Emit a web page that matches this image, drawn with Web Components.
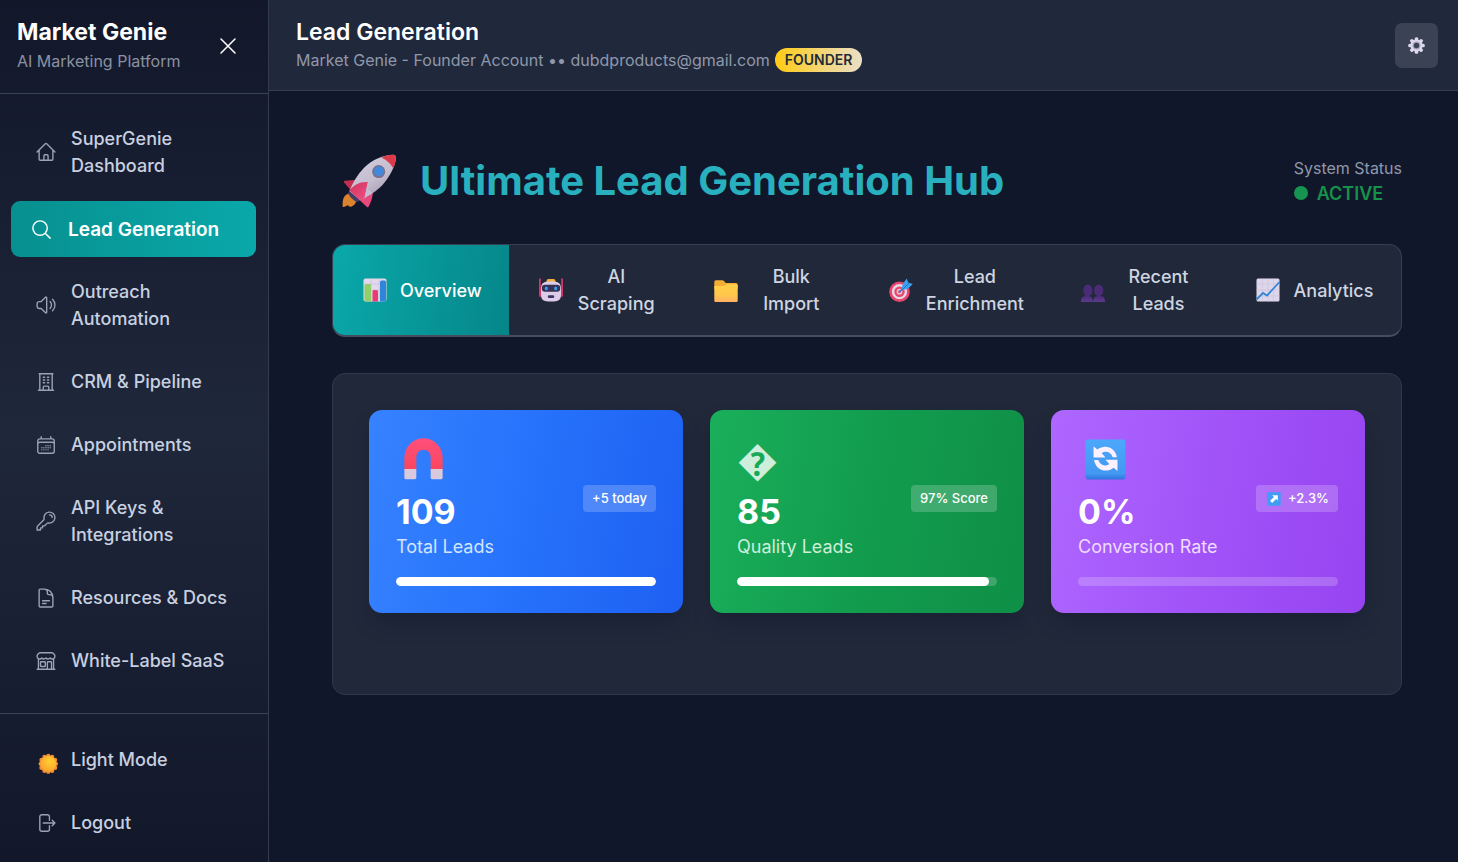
<!DOCTYPE html>
<html lang="en">
<head>
<meta charset="utf-8">
<meta name="viewport" content="width=device-width, initial-scale=1">
<title>Market Genie</title>
<style>
    body {
        margin: 0;
        background: #11172a;
        color: #fff;
        font-family: Inter, "Liberation Sans", sans-serif;
        font-size: 18px;
        line-height: 27px;
    }
</style>
</head>
<body>
<market-app>
    <side-bar slot="sidebar" heading="Market Genie" tagline="AI Marketing Platform">
        <nav-item icon="home">SuperGenie Dashboard</nav-item>
        <nav-item icon="search" active>Lead Generation</nav-item>
        <nav-item icon="speaker">Outreach Automation</nav-item>
        <nav-item icon="building">CRM &amp; Pipeline</nav-item>
        <nav-item icon="calendar">Appointments</nav-item>
        <nav-item icon="key">API Keys &amp; Integrations</nav-item>
        <nav-item icon="document">Resources &amp; Docs</nav-item>
        <nav-item icon="store">White-Label SaaS</nav-item>
        <nav-item slot="footer" icon="sun">Light Mode</nav-item>
        <nav-item slot="footer" icon="logout">Logout</nav-item>
    </side-bar>
    <top-bar slot="topbar" heading="Lead Generation" badge="FOUNDER">Market Genie - Founder Account •• dubdproducts@gmail.com</top-bar>
    <page-hero icon="rocket" status="ACTIVE">Ultimate Lead Generation Hub</page-hero>
    <tab-bar>
        <tab-item icon="chart" active>Overview</tab-item>
        <tab-item icon="robot">AI Scraping</tab-item>
        <tab-item icon="folder">Bulk Import</tab-item>
        <tab-item icon="target">Lead Enrichment</tab-item>
        <tab-item icon="people">Recent Leads</tab-item>
        <tab-item icon="trend">Analytics</tab-item>
    </tab-bar>
    <stat-panel>
        <stat-card color="blue" value="109" label="Total Leads" progress="100">
            <app-icon slot="icon" name="magnet"></app-icon>
            <span slot="badge">+5 today</span>
        </stat-card>
        <stat-card color="green" value="85" label="Quality Leads" progress="97">
            <span slot="icon">&#xFFFD;</span>
            <span slot="badge">97% Score</span>
        </stat-card>
        <stat-card color="purple" value="0%" label="Conversion Rate" progress="0">
            <app-icon slot="icon" name="refresh"></app-icon>
            <app-icon slot="badge" name="arrow"></app-icon>
            <span slot="badge">+2.3%</span>
        </stat-card>
    </stat-panel>
</market-app>

<script>
// 24x24 line icons
const LINE_ICONS = {
    home: 'm2.25 12 8.954-8.955c.44-.439 1.152-.439 1.591 0L21.75 12M4.5 9.75v10.125c0 .621.504 1.125 1.125 1.125H9.75v-4.875c0-.621.504-1.125 1.125-1.125h2.25c.621 0 1.125.504 1.125 1.125V21h4.125c.621 0 1.125-.504 1.125-1.125V9.75M8.25 21h8.25',
    search: 'm21 21-5.197-5.197m0 0A7.5 7.5 0 1 0 5.196 5.196a7.5 7.5 0 0 0 10.607 10.607Z',
    speaker: 'M19.114 5.636a9 9 0 0 1 0 12.728M16.463 8.288a5.25 5.25 0 0 1 0 7.424M6.75 8.25l4.72-4.72a.75.75 0 0 1 1.28.53v15.88a.75.75 0 0 1-1.28.53l-4.72-4.72H4.51c-.88 0-1.704-.507-1.938-1.354A9.009 9.009 0 0 1 2.25 12c0-.83.112-1.633.322-2.396C2.806 8.756 3.63 8.25 4.51 8.25H6.75Z',
    building: 'M3.75 21h16.5M4.5 3h15M5.25 3v18m13.5-18v18M9 6.75h1.5m-1.5 3h1.5m-1.5 3h1.5m3-6H15m-1.5 3H15m-1.5 3H15M9 21v-3.375c0-.621.504-1.125 1.125-1.125h3.75c.621 0 1.125.504 1.125 1.125V21',
    calendar: 'M6.75 3v2.25M17.25 3v2.25M3 18.75V7.5a2.25 2.25 0 0 1 2.25-2.25h13.5A2.25 2.25 0 0 1 21 7.5v11.25m-18 0A2.25 2.25 0 0 0 5.25 21h13.5A2.25 2.25 0 0 0 21 18.75m-18 0v-7.5A2.25 2.25 0 0 1 5.25 9h13.5A2.25 2.25 0 0 1 21 11.25v7.5m-9-6h.008v.008H12v-.008ZM12 15h.008v.008H12V15Zm0 2.25h.008v.008H12v-.008ZM9.75 15h.008v.008H9.75V15Zm0 2.25h.008v.008H9.75v-.008ZM7.5 15h.008v.008H7.5V15Zm0 2.25h.008v.008H7.5v-.008Zm6.75-4.5h.008v.008h-.008v-.008Zm0 2.25h.008v.008h-.008V15Zm0 2.25h.008v.008h-.008v-.008Zm2.25-4.5h.008v.008H16.5v-.008Zm0 2.25h.008v.008H16.5V15Z',
    key: 'M15.75 5.25a3 3 0 0 1 3 3m3 0a6 6 0 0 1-7.029 5.912c-.563-.097-1.159.026-1.563.43L10.5 17.25H8.25v2.25H6v2.25H2.25v-2.818c0-.597.237-1.17.659-1.591l6.499-6.499c.404-.404.527-1 .43-1.563A6 6 0 1 1 21.75 8.25Z',
    document: 'M19.5 14.25v-2.625a3.375 3.375 0 0 0-3.375-3.375h-1.5A1.125 1.125 0 0 1 13.5 7.125v-1.5a3.375 3.375 0 0 0-3.375-3.375H8.25m0 12.75h7.5m-7.5 3H12M10.5 2.25H5.625c-.621 0-1.125.504-1.125 1.125v17.25c0 .621.504 1.125 1.125 1.125h12.75c.621 0 1.125-.504 1.125-1.125V11.25a9 9 0 0 0-9-9Z',
    store: 'M13.5 21v-7.5a.75.75 0 0 1 .75-.75h3a.75.75 0 0 1 .75.75V21m-4.5 0H2.36m11.14 0H18m0 0h3.64m-1.39 0V9.349M3.75 21V9.349m0 0a3.001 3.001 0 0 0 3.75-.615A2.993 2.993 0 0 0 9.75 9.75c.896 0 1.7-.393 2.25-1.016a2.993 2.993 0 0 0 2.25 1.016c.896 0 1.7-.393 2.25-1.015a3.001 3.001 0 0 0 3.75.614m-16.5 0a3.004 3.004 0 0 1-.621-4.72l1.189-1.19A1.5 1.5 0 0 1 5.378 3h13.243a1.5 1.5 0 0 1 1.06.44l1.19 1.189a3 3 0 0 1-.621 4.72M6.75 18h3.75a.75.75 0 0 0 .75-.75V13.5a.75.75 0 0 0-.75-.75H6.75a.75.75 0 0 0-.75.75v3.75c0 .414.336.75.75.75Z',
    logout: 'M15.75 9V5.25A2.25 2.25 0 0 0 13.5 3h-6a2.25 2.25 0 0 0-2.25 2.25v13.5A2.25 2.25 0 0 0 7.5 21h6a2.25 2.25 0 0 0 2.25-2.25V15m3 0 3-3m0 0-3-3m3 3H9',
    close: 'M5 19 19 5M5 5l14 14'
};

// coloured pictures, all on a 24x24 grid
const COLOR_ICONS = {
    sun: `
        <defs><radialGradient id="g" cx=".6" cy=".35" r=".7"><stop offset="0" stop-color="#ffd02e"/><stop offset="1" stop-color="#f9a02c"/></radialGradient></defs>
        <g transform="translate(.3 2.4)"><g fill="#f38a34"><circle cx="14.2" cy="5.2" r="2.4"/><circle cx="18.4" cy="6.3" r="2.4"/><circle cx="21.600" cy="9.500" r="2.4"/><circle cx="22.400" cy="13.800" r="2.4"/><circle cx="21.600" cy="18.100" r="2.4"/><circle cx="18.400" cy="21.300" r="2.4"/><circle cx="14.200" cy="22.300" r="2.4"/><circle cx="10" cy="21.300" r="2.4"/><circle cx="6.800" cy="18.100" r="2.4"/><circle cx="6" cy="13.800" r="2.4"/><circle cx="6.800" cy="9.500" r="2.4"/><circle cx="10" cy="6.300" r="2.4"/></g>
        <circle cx="14.2" cy="13.8" r="8.8" fill="url(#g)"/></g>`,
    gear: `
        <g fill="#dcd9ea"><g id="t"><rect x="9.7" y="1.5" width="4.6" height="21" rx="2"/><rect x="1.5" y="9.7" width="21" height="4.6" rx="2"/></g><use href="#t" transform="rotate(45 12 12)"/><circle cx="12" cy="12" r="7.6"/></g>
        <circle cx="12" cy="12" r="5" fill="#aaa5bd"/><circle cx="12" cy="12" r="3.4" fill="#3b4356"/>`,
    rocket: `
        <defs>
            <linearGradient id="b" x1=".2" y1="0" x2=".8" y2="1"><stop offset="0" stop-color="#d6d0e0"/><stop offset=".55" stop-color="#c4bccf"/><stop offset="1" stop-color="#9d93a8"/></linearGradient>
            <linearGradient id="f" x1="0" y1="0" x2="1" y2="1"><stop offset="0" stop-color="#cf3458"/><stop offset="1" stop-color="#f0518a"/></linearGradient>
        </defs>
        <path d="M3 17.500C.9 18.100.1 20 .3 23.500 1.200 23.600 2 23.200 2.500 22.700 2.800 23.200 3.600 23.700 4.300 23.300 5.700 22.600 6.300 21.700 6.300 20.500z" fill="#dc832d"/>
        <path d="M7.800 11.300 1.200 11.900Q.6 12 .9 12.500L4 16.300z" fill="#c32d50"/>
        <path d="M13.700 17.200C13.600 19.500 12.800 21.500 11.800 23.400Q11.500 23.900 11.100 23.500L6.800 19.600z" fill="#e8487a"/>
        <path d="M3.300 16.100 2.700 17.500C3.500 19 5.200 20.800 6.700 21.300L8.200 20.700z" fill="#433b66"/>
        <path d="M23.900 1.400Q23.900.4 22.900.3C18.500.4 13.500 2.300 9.700 6.200 6.800 9.200 4.700 12.800 3.300 16.400L8 20.500C13 18.300 17.300 15.300 20 11.200 22.500 7.500 24 4 23.900 1.400z" fill="url(#b)"/>
        <path d="M17.500 1.500C19.500.6 21.300.2 22.900.3Q23.900.4 23.900 1.400C24 3 23.500 4.800 22.800 6.300 21.500 4.100 19.800 2.600 17.500 1.500z" fill="#dc3a48"/>
        <circle cx="16.300" cy="7.800" r="2.900" fill="#77708f"/><circle cx="16.400" cy="7.700" r="2.200" fill="#4289dc"/>
        <path d="M3.300 16.200C5.300 13.800 8.200 12.200 11.500 12.500L10 19.400 8 20.500z" fill="url(#f)"/>
        <path d="M11.500 12.500 10 19.600 13.500 17.400 11.500 15.500z" fill="#c4bccf"/>`,
    chart: `
        <rect x=".5" y=".5" width="23" height="23" rx="2" fill="#e3d9ec"/>
        <path d="M8 .5v23M16 .5v23M.5 6h23M.5 12h23M.5 18h23" stroke="#c6b8d3" stroke-width=".6"/>
        <path d="M1.500 7.500q0-1.500 1.500-1.500h3.500q1.500 0 1.500 1.500v16h-5q-1.500 0-1.500-1.500z" fill="#8fd06a"/>
        <path d="M9.500 13.500q0-1.500 1.500-1.500h2.500q1.500 0 1.500 1.500v10H9.500z" fill="#e83d70"/>
        <path d="M17 4q0-1.500 1.500-1.500h3q1.500 0 1.500 1.500v18q0 1.500-1.500 1.500H17z" fill="#2f86d9"/>`,
    robot: `
        <path d="M.9 1v17M23.100 1v17" stroke="#e23b69" stroke-width="1.600" stroke-linecap="round"/>
        <rect x=".3" y="9" width="4" height="10" rx="2" fill="#d93464"/><rect x="19.700" y="9" width="4" height="10" rx="2" fill="#d93464"/>
        <rect x="7.500" y="1" width="9" height="5" rx="2" fill="#f2b23e"/>
        <path d="M2 10q0-6.500 7-6.500h6q7 0 7 6.500v7q0 6.500-7 6.500H9q-7 0-7-6.500z" fill="#dccbe9"/>
        <rect x="2.800" y="6.800" width="18.400" height="7" rx="3.200" fill="#343057"/>
        <rect x="5.800" y="8.500" width="3" height="3.800" rx="1.500" fill="#3a9be8"/><rect x="15.200" y="8.500" width="3" height="3.800" rx="1.500" fill="#3a9be8"/>
        <rect x="8.800" y="17.300" width="6.400" height="2.600" rx="1.200" fill="#3b355d"/>`,
    folder: `
        <defs><linearGradient id="g" x1="0" y1="0" x2="0" y2="1"><stop offset="0" stop-color="#ffd04a"/><stop offset=".6" stop-color="#ffc74a"/><stop offset="1" stop-color="#ffb066"/></linearGradient></defs>
        <path d="M.3 3.800q0-1.500 1.500-1.500h6.500q1 0 1.700.8l1.800 2H22q1.700 0 1.700 1.700v4H.3z" fill="#f3ae34"/>
        <path d="M.3 8h9.500l3-1.800H22q1.700 0 1.700 1.500v15q0 1.300-1.300 1.300H1.600Q.3 24 .3 22.700z" fill="url(#g)"/>`,
    target: `
        <circle cx="10.500" cy="13.700" r="10.300" fill="#e8456d"/><circle cx="10.500" cy="13.700" r="7.600" fill="#e9d5e6"/>
        <circle cx="10.500" cy="13.700" r="5.200" fill="#e8456d"/><circle cx="10.500" cy="13.700" r="2.900" fill="#ddc6da"/><circle cx="10.500" cy="13.700" r="1.300" fill="#d43b66"/>
        <path d="M11 13.500 19 5.500" stroke="#2973c4" stroke-width="1.600"/>
        <path d="M12.500 10.500 14 5.500 17.800.5l1.400 4L23.800 6l-4.600 4.400-5 1.700z" fill="#38a0ef"/>
        <path d="m14 11 6-6" stroke="#1f74c8" stroke-width="1"/>`,
    people: `
        <defs><linearGradient id="g" x1="0" y1="0" x2="0" y2="1"><stop offset="0" stop-color="#4a2c78"/><stop offset="1" stop-color="#5d3a8c"/></linearGradient></defs>
        <g fill="url(#g)"><path d="M0 24q-.5-5.500 4.500-6H8q4 .5 3.800 6z"/><path d="M12.200 24q-.3-5.500 4.200-6H20q4.300.5 4 6z"/></g>
        <g fill="#492c75"><ellipse cx="6.800" cy="12.500" rx="4.600" ry="6"/><ellipse cx="17.700" cy="12.500" rx="4.600" ry="6"/></g>`,
    trend: `
        <rect x=".5" y=".5" width="23" height="23" rx="1.500" fill="#ddd5ea"/>
        <path d="M6.500.5v23M12 .5v23M17.500.5v23M.5 6h23M.5 12h23M.5 18h23" stroke="#cdc2dc" stroke-width=".6"/>
        <path d="m.5 21.500 6.500-6.500 4 2.500L23.500 4" fill="none" stroke="#2f86d9" stroke-width="1.800"/>`,
    magnet: `
        <defs><linearGradient id="g" x1="0" y1="0" x2="0" y2="1"><stop offset="0" stop-color="#ff4f7c"/><stop offset="1" stop-color="#f9465c"/></linearGradient></defs>
        <path d="M.8 18V10.800a11.200 11.200 0 0 1 22.400 0V18h-7v-7.500a4.200 4.200 0 0 0-8.400 0V18z" fill="url(#g)"/>
        <path d="M.8 17.500h7v5.200q0 .8-.8.8H1.600q-.8 0-.8-.8zM16.200 17.500h7v5.200q0 .8-.8.8H17q-.8 0-.8-.8z" fill="#d8c9dc"/>`,
    refresh: `
        <defs><linearGradient id="g" x1="0" y1="0" x2="0" y2="1"><stop offset="0" stop-color="#4ca8fb"/><stop offset=".85" stop-color="#4398f2"/><stop offset="1" stop-color="#2f75dc"/></linearGradient></defs>
        <rect x=".3" y=".3" width="23.400" height="23.400" rx="1.800" fill="url(#g)"/>
        <g fill="#fdf0ff"><path id="a" d="M5 4.300 7.200 6.200C11.500 2.900 17.600 4.500 18.700 10.700H16.200C15.200 7.700 12.200 6.600 9.800 8.400L12 10.900H5z"/><use href="#a" transform="rotate(180 12 11.500)"/></g>`,
    arrow: `
        <rect x=".5" y=".5" width="23" height="23" rx="2" fill="#3f9df5"/>
        <path d="M9 5.500h9.500V15l-3-3-6.700 6.700-3.500-3.500L12 8.500z" fill="#fff"/>`
};

class AppIcon extends HTMLElement {

    constructor() {
        super();
        this.root = this.attachShadow({ mode: 'open' });
    }

    connectedCallback() {
        const name = this.getAttribute('name');
        const shape = LINE_ICONS[name]
            ? `<path d="${LINE_ICONS[name]}" fill="none" stroke="currentColor" stroke-width="1.5" stroke-linecap="round" stroke-linejoin="round"/>`
            : COLOR_ICONS[name];
        this.root.innerHTML = `
            <style>
                :host {
                    display: block;
                    flex: none;
                    width: 22px;
                    height: 22px;
                }
                svg {
                    display: block;
                    width: 100%;
                    height: 100%;
                    overflow: visible;
                }
            </style>
            <svg viewBox="0 0 24 24" aria-hidden="true">${shape}</svg>
        `;
    }
}

class MarketApp extends HTMLElement {

    constructor() {
        super();
        this.root = this.attachShadow({ mode: 'open' });
        this.root.innerHTML = `
            <style>
                :host {
                    display: grid;
                    grid-template-columns: 269px minmax(0, 1fr);
                    height: 100vh;
                    overflow: hidden;
                }
                .page {
                    display: flex;
                    flex-direction: column;
                    min-height: 0;
                }
                main {
                    display: flex;
                    flex-direction: column;
                    gap: 36px;
                    flex: 1;
                    padding: 63px 56px 36px 63px;
                    overflow: auto;
                }
            </style>
            <slot name="sidebar"></slot>
            <div class="page">
                <slot name="topbar"></slot>
                <main><slot></slot></main>
            </div>
        `;
    }
}

class SideBar extends HTMLElement {

    constructor() {
        super();
        this.root = this.attachShadow({ mode: 'open' });
    }

    connectedCallback() {
        this.root.innerHTML = `
            <style>
                :host {
                    display: flex;
                    flex-direction: column;
                    overflow-y: auto;
                    scrollbar-width: none;
                    border-right: 1px solid #333b4d;
                    background: linear-gradient(#12172a, #1f273a 50%, #12172a);
                }
                header {
                    display: flex;
                    align-items: center;
                    justify-content: space-between;
                    padding: 18px 28px 20px 17px;
                    border-bottom: 1px solid #3a4254;
                }
                h1 {
                    margin: 0 0 3px;
                    font-size: 23px;
                    line-height: 28px;
                    font-weight: 700;
                }
                p {
                    margin: 0;
                    font-size: 16px;
                    line-height: 24px;
                    color: #8b91a2;
                }
                button {
                    padding: 0;
                    border: 0;
                    background: none;
                    color: #fff;
                }
                button app-icon {
                    width: 24px;
                    height: 24px;
                }
                nav, footer {
                    display: flex;
                    flex-direction: column;
                    gap: 9px;
                    padding: 18px;
                }
                nav {
                    padding-bottom: 25px;
                }
                footer {
                    padding-top: 19px;
                    border-top: 1px solid #3a4254;
                }
            </style>
            <header>
                <div>
                    <h1>${this.getAttribute('heading')}</h1>
                    <p>${this.getAttribute('tagline')}</p>
                </div>
                <button type="button" aria-label="Close menu"><app-icon name="close"></app-icon></button>
            </header>
            <nav><slot></slot></nav>
            <footer><slot name="footer"></slot></footer>
        `;
    }
}

class NavItem extends HTMLElement {

    constructor() {
        super();
        this.root = this.attachShadow({ mode: 'open' });
    }

    connectedCallback() {
        this.root.innerHTML = `
            <style>
                :host {
                    display: block;
                }
                a {
                    display: flex;
                    align-items: center;
                    gap: 14px;
                    padding: 13px 17px 14px;
                    border-radius: 9px;
                    color: #c8d0e0;
                    font-weight: 500;
                    text-decoration: none;
                }
                app-icon {
                    color: #9aa3b5;
                }
                :host([active]) a {
                    margin: -1px -6px -1px -7px;
                    padding: 15px 19px 14px;
                    gap: 15px;
                    background: linear-gradient(90deg, #07908f, #0aa8aa);
                    color: #fff;
                    font-size: 19px;
                    font-weight: 600;
                }
                :host([active]) app-icon {
                    width: 23px;
                    height: 23px;
                    color: #fff;
                }
            </style>
            <a href="#"><app-icon name="${this.getAttribute('icon')}"></app-icon><span><slot></slot></span></a>
        `;
    }
}

class TopBar extends HTMLElement {

    constructor() {
        super();
        this.root = this.attachShadow({ mode: 'open' });
    }

    connectedCallback() {
        this.root.innerHTML = `
            <style>
                :host {
                    display: flex;
                    align-items: center;
                    justify-content: space-between;
                    padding: 18px 20px 18px 27px;
                    border-bottom: 1px solid #363e51;
                    background: #20283b;
                }
                h2 {
                    margin: 0 0 1px;
                    font-size: 23px;
                    line-height: 29px;
                    font-weight: 600;
                }
                p {
                    display: flex;
                    align-items: center;
                    gap: 5px;
                    margin: 0;
                    font-size: 16px;
                    line-height: 24px;
                    color: #8f98ab;
                }
                .badge {
                    padding: 0 10px;
                    border-radius: 12px;
                    background: linear-gradient(90deg, #ffcb14, #eadfc8);
                    color: #1f2937;
                    font-size: 14px;
                    font-weight: 600;
                }
                button {
                    padding: 13px 12px;
                    border: 0;
                    border-radius: 7px;
                    background: #3a4254;
                }
                app-icon {
                    width: 19px;
                    height: 19px;
                }
            </style>
            <div>
                <h2>${this.getAttribute('heading')}</h2>
                <p><span><slot></slot></span><span class="badge">${this.getAttribute('badge')}</span></p>
            </div>
            <button type="button" aria-label="Settings"><app-icon name="gear"></app-icon></button>
        `;
    }
}

class PageHero extends HTMLElement {

    constructor() {
        super();
        this.root = this.attachShadow({ mode: 'open' });
    }

    connectedCallback() {
        this.root.innerHTML = `
            <style>
                :host {
                    display: flex;
                    align-items: center;
                    justify-content: space-between;
                }
                .title {
                    display: flex;
                    align-items: center;
                    gap: 23px;
                    padding-left: 9px;
                }
                .title app-icon {
                    width: 56px;
                    height: 54px;
                }
                h1 {
                    margin: 0;
                    font-size: 40px;
                    line-height: 54px;
                    font-weight: 700;
                    color: #29b0be;
                }
                .label {
                    font-size: 16px;
                    line-height: 24px;
                    color: #8f98ab;
                }
                .value {
                    display: flex;
                    align-items: center;
                    gap: 9px;
                    line-height: 27px;
                    font-weight: 600;
                    color: #16924b;
                }
                .value::before {
                    content: "";
                    width: 14px;
                    height: 14px;
                    border-radius: 50%;
                    background: #169552;
                }
            </style>
            <div class="title">
                <app-icon name="${this.getAttribute('icon')}"></app-icon>
                <h1><slot></slot></h1>
            </div>
            <div>
                <div class="label">System Status</div>
                <div class="value">${this.getAttribute('status')}</div>
            </div>
        `;
    }
}

class TabBar extends HTMLElement {

    constructor() {
        super();
        this.root = this.attachShadow({ mode: 'open' });
        this.root.innerHTML = `
            <style>
                :host {
                    display: flex;
                    overflow: hidden;
                    flex: none;
                    border: 1px solid #363e50;
                    border-bottom: 2px solid #454d60;
                    border-radius: 13px;
                    background: #20283a;
                }
            </style>
            <slot></slot>
        `;
    }
}

class TabItem extends HTMLElement {

    constructor() {
        super();
        this.root = this.attachShadow({ mode: 'open' });
    }

    connectedCallback() {
        this.root.innerHTML = `
            <style>
                :host {
                    display: flex;
                    flex: 1 1 0;
                }
                button {
                    display: flex;
                    align-items: center;
                    flex: 1;
                    gap: 13px;
                    padding: 18px 27px 18px 30px;
                    border: 0;
                    background: none;
                    color: #ced5e0;
                    font: inherit;
                    font-weight: 500;
                }
                :host([active]) button {
                    background: linear-gradient(100deg, #0aa8aa, #058689);
                    color: #fff;
                }
                app-icon {
                    width: 24px;
                    height: 24px;
                }
                span {
                    flex: 1;
                    text-align: center;
                }
            </style>
            <button type="button"><app-icon name="${this.getAttribute('icon')}"></app-icon><span><slot></slot></span></button>
        `;
    }
}

class StatPanel extends HTMLElement {

    constructor() {
        super();
        this.root = this.attachShadow({ mode: 'open' });
        this.root.innerHTML = `
            <style>
                :host {
                    display: grid;
                    grid-template-columns: repeat(3, minmax(0, 1fr));
                    gap: 27px;
                    padding: 36px 36px 81px;
                    border: 1px solid #303849;
                    border-radius: 13px;
                    background: #20283a;
                }
            </style>
            <slot></slot>
        `;
    }
}

class StatCard extends HTMLElement {

    constructor() {
        super();
        this.root = this.attachShadow({ mode: 'open' });
    }

    connectedCallback() {
        const progress = this.getAttribute('progress');
        this.root.innerHTML = `
            <style>
                :host {
                    display: block;
                    padding: 27px;
                    border-radius: 13px;
                    box-shadow: 0 12px 20px -4px rgba(15, 20, 38, .35);
                }
                :host([color="blue"]) {
                    --soft: #d3e4ff;
                    background: linear-gradient(100deg, #3682ff, #2672fb 50%, #1e60f2);
                }
                :host([color="green"]) {
                    --soft: #cdeeda;
                    background: linear-gradient(100deg, #1aaf5b, #129c4e 50%, #0f8f47);
                }
                :host([color="purple"]) {
                    --soft: #eedcff;
                    background: linear-gradient(100deg, #ae67ff, #a153f8 50%, #9744f0);
                }
                .top {
                    display: flex;
                    align-items: center;
                    justify-content: space-between;
                    margin-bottom: 17px;
                }
                .icon {
                    display: flex;
                    align-items: center;
                    height: 45px;
                    margin-bottom: 9px;
                    color: var(--soft);
                    font-family: "Noto Sans", "Open Sans", sans-serif;
                    font-size: 41px;
                    line-height: 45px;
                }
                .icon ::slotted(app-icon) {
                    width: 41px;
                    height: 41px;
                    margin-left: 7px;
                }
                .value {
                    margin-bottom: 1px;
                    font-size: 34px;
                    line-height: 41px;
                    font-weight: 700;
                }
                .label {
                    color: var(--soft);
                }
                .badge {
                    display: flex;
                    align-items: center;
                    gap: 7px;
                    padding: 0 9px;
                    border-radius: 4px;
                    background: rgba(255, 255, 255, .2);
                    font-size: 13px;
                    font-weight: 500;
                }
                .badge ::slotted(app-icon) {
                    width: 14px;
                    height: 14px;
                    margin-left: 2px;
                }
                .track {
                    height: 9px;
                    border-radius: 5px;
                    background: rgba(255, 255, 255, .2);
                    overflow: hidden;
                }
                .fill {
                    width: ${progress}%;
                    height: 100%;
                    border-radius: 5px;
                    background: #fff;
                }
            </style>
            <div class="top">
                <div>
                    <div class="icon"><slot name="icon"></slot></div>
                    <div class="value">${this.getAttribute('value')}</div>
                    <div class="label">${this.getAttribute('label')}</div>
                </div>
                <div class="badge"><slot name="badge"></slot></div>
            </div>
            <div class="track" role="progressbar" aria-valuenow="${progress}" aria-label="${this.getAttribute('label')}"><div class="fill"></div></div>
        `;
    }
}

customElements.define('app-icon', AppIcon);
customElements.define('market-app', MarketApp);
customElements.define('side-bar', SideBar);
customElements.define('nav-item', NavItem);
customElements.define('top-bar', TopBar);
customElements.define('page-hero', PageHero);
customElements.define('tab-bar', TabBar);
customElements.define('tab-item', TabItem);
customElements.define('stat-panel', StatPanel);
customElements.define('stat-card', StatCard);
</script>
</body>
</html>
